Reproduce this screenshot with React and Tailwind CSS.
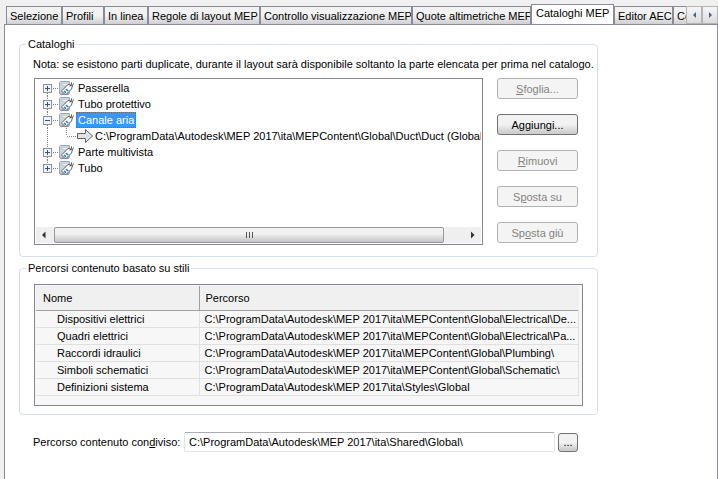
import clsx from 'clsx';

// ─── Data ─────────────────────────────────────────────────────────────────────
const TABS = [
  { label: 'Selezione', width: 'w-14' },
  { label: 'Profili', width: 'w-[42px]' },
  { label: 'In linea', width: 'w-11' },
  { label: 'Regole di layout MEP', width: 'w-28' },
  { label: 'Controllo visualizzazione MEP', width: 'w-[152px]' },
  { label: 'Quote altimetriche MEP', width: 'w-[119px]' },
  { label: 'Cataloghi MEP', width: 'w-[83px]', active: true },
  { label: 'Editor AEC', width: 'w-[59px]' },
  { label: 'Co', width: 'w-[60px]' },
];

const TREE = [
  { label: 'Passerella' },
  { label: 'Tubo protettivo' },
  {
    label: 'Canale aria',
    selected: true,
    path: 'C:\\ProgramData\\Autodesk\\MEP 2017\\ita\\MEPContent\\Global\\Duct\\Duct (Global)',
  },
  { label: 'Parte multivista' },
  { label: 'Tubo' },
];

const ACTIONS = [
  { before: '', key: 'S', after: 'foglia...', disabled: true },
  { before: 'A', key: 'g', after: 'giungi...', disabled: false },
  { before: '', key: 'R', after: 'imuovi', disabled: true },
  { before: 'S', key: 'p', after: 'osta su', disabled: true },
  { before: 'Sp', key: 'o', after: 'sta giù', disabled: true },
];

const STYLE_PATHS = [
  ['Dispositivi elettrici', 'C:\\ProgramData\\Autodesk\\MEP 2017\\ita\\MEPContent\\Global\\Electrical\\De...'],
  ['Quadri elettrici', 'C:\\ProgramData\\Autodesk\\MEP 2017\\ita\\MEPContent\\Global\\Electrical\\Pa...'],
  ['Raccordi idraulici', 'C:\\ProgramData\\Autodesk\\MEP 2017\\ita\\MEPContent\\Global\\Plumbing\\'],
  ['Simboli schematici', 'C:\\ProgramData\\Autodesk\\MEP 2017\\ita\\MEPContent\\Global\\Schematic\\'],
  ['Definizioni sistema', 'C:\\ProgramData\\Autodesk\\MEP 2017\\ita\\Styles\\Global'],
];

// ─── Tabs ─────────────────────────────────────────────────────────────────────
function TabBar() {
  return (
    <div className="flex h-6 items-end bg-[#f0f0f0] pl-1.5">
      <div role="tablist" className="flex min-w-0 flex-1 items-end overflow-hidden">
        {TABS.map(({ label, width, active }) => (
          <button
            key={label}
            type="button"
            role="tab"
            aria-selected={Boolean(active)}
            className={clsx(
              'shrink-0 overflow-hidden border border-b-0 border-[#898c95] text-left whitespace-nowrap',
              width,
              active
                ? 'h-5 bg-white pb-1 pl-1'
                : 'h-[18px] bg-linear-to-b from-[#f2f2f2] from-50% to-[#cfcfcf] pl-[3px]',
            )}
          >
            {label}
          </button>
        ))}
      </div>
      <TabScroll label="Indietro" points="9,4 9,10 6,7" />
      <TabScroll label="Avanti" points="6,4 6,10 9,7" />
    </div>
  );
}

function TabScroll({ label, points }) {
  return (
    <button
      type="button"
      aria-label={label}
      className="flex h-[18px] w-4 shrink-0 items-center justify-center border border-[#b4b4b8] bg-linear-to-b from-[#f6f6f6] to-[#dcdcdc]"
    >
      <svg width="14" height="14" viewBox="0 0 14 14" className="shrink-0">
        <polygon points={points} fill="#4b5f95" />
      </svg>
    </button>
  );
}

// ─── Shared pieces ────────────────────────────────────────────────────────────
function GroupBox({ title, className, children }) {
  return (
    <fieldset className={clsx('min-w-0 rounded border border-[#d5dfe5]', className)}>
      <legend className="ml-1.5 h-3.5 px-0.5 leading-[14px]">{title}</legend>
      {children}
    </fieldset>
  );
}

function PushButton({ disabled, className, children, ...rest }) {
  return (
    <button
      type="button"
      disabled={disabled}
      className={clsx(
        'rounded-[3px] border',
        disabled
          ? 'border-[#adb2b5] bg-[#f4f4f4] text-[#838383]'
          : 'border-[#707070] bg-linear-to-b from-[#f2f2f2] from-50% to-[#cfcfcf] to-90%',
        className,
      )}
      {...rest}
    >
      {children}
    </button>
  );
}

// ─── Catalog tree ─────────────────────────────────────────────────────────────
function BranchGlyph({ open, first, last }) {
  return (
    <svg width="36" height="16" viewBox="0 0 36 16" className="shrink-0" shapeRendering="crispEdges">
      <g stroke="#808080" strokeDasharray="1 1">
        {!first && <path d="M8.5 0V4" />}
        {!last && <path d="M8.5 13V16" />}
        <path d="M14 8.5H19" />
      </g>
      <rect x="4.5" y="4.5" width="8" height="8" fill="#f4f4f4" stroke="#919191" />
      <path d="M6 8.5H11" stroke="#2f4f9f" />
      {!open && <path d="M8.5 6V11" stroke="#2f4f9f" />}
      {/* book with a price tag hanging over its corner */}
      <g shapeRendering="auto">
        <path d="M21.5 1.5H30.5V13.5H21.5L20.5 12.5V2.5Z" fill="#cdd3db" stroke="#a0a8b4" />
        <path d="M20.5 11.5V13.5L21.5 14.5H30" fill="none" stroke="#8e98a6" />
        <path d="M24 4.5H27.5V6" fill="none" stroke="#eef0f3" />
        <path d="M22.5 11L29 4.5L33.5 5.5L32.5 9L26.5 15Z" fill="#fff" stroke="#5a6069" />
        <path d="M31 6.5L32.5 4V2.5M33.5 5.5L34.5 3.5" fill="none" stroke="#4b5159" />
        <path d="M25 11L27 13M27 9L29 11" stroke="#2d78bd" strokeWidth="1.6" />
      </g>
    </svg>
  );
}

function PathGlyph() {
  return (
    <svg width="56" height="16" viewBox="0 0 56 16" className="shrink-0">
      <g stroke="#808080" strokeDasharray="1 1" shapeRendering="crispEdges">
        <path d="M8.5 0V16" />
        <path d="M27.5 0V8" />
        <path d="M28 8.5H38" />
      </g>
      <path d="M38.5 5.5H46.5V1.5L53.5 8L46.5 14.5V10.5H38.5Z" fill="#e2e3e6" stroke="#5c6068" />
    </svg>
  );
}

function CatalogTree() {
  return (
    <div className="flex h-[167px] min-w-0 flex-1 flex-col border border-[#828790] bg-white p-px">
      <ul className="flex-1 overflow-hidden pl-[3px]">
        {TREE.map(({ label, selected, path }, i) => (
          <li key={label}>
            <div className="flex h-4 items-center">
              <BranchGlyph open={Boolean(path)} first={i === 0} last={i === TREE.length - 1} />
              <span
                className={clsx(
                  'ml-px px-0.5 leading-4',
                  selected && 'bg-[#3399ff] text-white outline outline-dotted -outline-offset-1 outline-[#a0621e]',
                )}
              >
                {label}
              </span>
            </div>
            {path && (
              <div className="flex h-4 items-center whitespace-nowrap">
                <PathGlyph />
                <span>{path}</span>
              </div>
            )}
          </li>
        ))}
      </ul>
      <HorizontalScrollbar />
    </div>
  );
}

function HorizontalScrollbar() {
  return (
    <div className="flex h-4 shrink-0 bg-[#efefef]">
      <svg width="18" height="16" viewBox="0 0 18 16" className="shrink-0">
        <path d="M9.5 4.5V11.5L6 8Z" fill="#333" />
      </svg>
      <div className="flex min-w-0 flex-1 items-center justify-center gap-0.5 rounded-xs border border-[#979797] bg-linear-to-b from-[#f2f2f2] from-40% to-[#c4c4c8]">
        <span className="h-1.5 w-px bg-[#555]" />
        <span className="h-1.5 w-px bg-[#555]" />
        <span className="h-1.5 w-px bg-[#555]" />
      </div>
      <svg width="37" height="16" viewBox="0 0 37 16" className="ml-auto shrink-0">
        <path d="M27 4.5V11.5L30.5 8Z" fill="#333" />
      </svg>
    </div>
  );
}

// ─── Style content paths ──────────────────────────────────────────────────────
function PathTable() {
  return (
    <div className="h-[122px] border border-[#828790] bg-[#f7f7f7] p-px pr-[3px]">
      <table className="w-full table-fixed border-collapse text-left">
        <colgroup>
          <col className="w-[163px]" />
          <col />
        </colgroup>
        <thead>
          <tr className="h-6 border-b border-[#a0a0a0] bg-[#f0f0f0]">
            <th className="border-r border-[#a0a0a0] pl-[7px] font-normal">Nome</th>
            <th className="pl-1.5 font-normal">Percorso</th>
          </tr>
        </thead>
        <tbody>
          {STYLE_PATHS.map(([name, path]) => (
            <tr key={name} className="h-[17px] border-b border-[#e0e0e0]">
              <td className="border-r border-[#e0e0e0] pl-[21px]">{name}</td>
              <td className="truncate border-r border-[#e0e0e0] pl-[5px]">{path}</td>
            </tr>
          ))}
        </tbody>
      </table>
    </div>
  );
}

// ─── Page ─────────────────────────────────────────────────────────────────────
export default function App() {
  return (
    <div className="flex min-h-screen flex-col bg-[#f0f0f0] font-['Liberation_Sans',Arial,sans-serif] text-[11px] leading-[14px] text-black">
      <TabBar />
      <main className="ml-1 flex-1 border border-b-0 border-[#898c95] bg-white pt-3 pl-3.5">
        <div className="max-w-[579px]">
          <GroupBox title="Cataloghi" className="pb-[11px]">
            <p className="mt-1.5 mb-[7px] pl-[13px] whitespace-nowrap">
              Nota: se esistono parti duplicate, durante il layout sarà disponibile soltanto la parte elencata per prima
              nel catalogo.
            </p>
            <div className="flex gap-3.5 pr-[19px] pl-3.5">
              <CatalogTree />
              <div className="flex w-[81px] shrink-0 flex-col gap-[15px]">
                {ACTIONS.map(({ before, key, after, disabled }) => (
                  <PushButton key={before + key} disabled={disabled} className="h-[21px]">
                    {before}
                    <u>{key}</u>
                    {after}
                  </PushButton>
                ))}
              </div>
            </div>
          </GroupBox>

          <GroupBox title="Percorsi contenuto basato su stili" className="mt-1">
            <div className="px-3.5 pt-[9px] pb-2">
              <PathTable />
            </div>
          </GroupBox>

          <div className="mt-[17px] flex items-center pr-5 pl-3.5">
            <label htmlFor="shared-path" className="w-[151px] shrink-0 whitespace-nowrap">
              Percorso contenuto con<u>d</u>iviso:
            </label>
            <input
              id="shared-path"
              type="text"
              defaultValue="C:\ProgramData\Autodesk\MEP 2017\ita\Shared\Global\"
              className="h-5 min-w-0 flex-1 rounded-xs border border-[#e2e3ea] border-t-[#abadb3] bg-white px-1"
            />
            <PushButton aria-label="Sfoglia percorso condiviso" className="ml-[3px] h-[19px] w-5 leading-3">
              ...
            </PushButton>
          </div>
        </div>
      </main>
    </div>
  );
}
